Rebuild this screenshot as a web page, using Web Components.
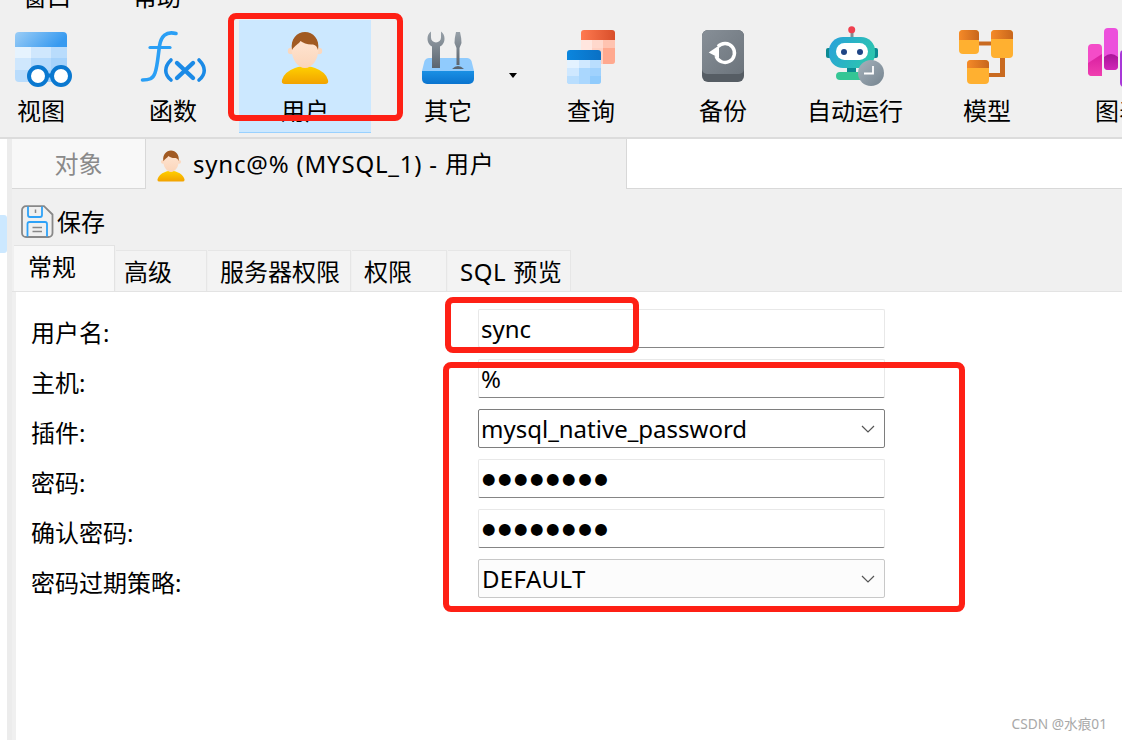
<!DOCTYPE html>
<html lang="zh">
<head>
<meta charset="utf-8">
<title>Navicat</title>
<style>
  html, body { margin: 0; height: 740px; overflow: hidden; background: #fff; }
  body { font: 24px/30px "Noto Sans", "Noto Sans CJK SC", sans-serif; color: #000; }
</style>
</head>
<body>
<app-window>
  <tool-bar>
    <tool-item label="视图">
      <svg width="76" height="62" viewBox="3 26 76 62">
        <defs>
          <linearGradient id="vh" x1="0" y1="0" x2="1" y2="0.3"><stop offset="0" stop-color="#9bcdf6"/><stop offset="1" stop-color="#379af0"/></linearGradient>
        </defs>
        <path d="M19 32h44a4 4 0 0 1 4 4v11H15V36a4 4 0 0 1 4-4z" fill="url(#vh)"/>
        <path d="M15 47h16v11H15z" fill="#e6f3fe"/><path d="M31 47h20v11H31z" fill="#cfe7fd"/><path d="M51 47h16v11H51z" fill="#b9dcfc"/>
        <path d="M15 58h16v12H15z" fill="#cfe7fd"/><path d="M31 58h20v12H31z" fill="#b5dafc"/><path d="M51 58h16v12H51z" fill="#a5d2fb"/>
        <path d="M15 70h16v12H19a4 4 0 0 1-4-4z" fill="#b9dcfc"/><path d="M31 70h20v12H31z" fill="#a5d2fb"/><path d="M51 70h16v12H51z" fill="#96cbfa"/>
        <path d="M44 73.500h12v4H44z" fill="#0a78d0"/>
        <circle cx="38" cy="76" r="9" fill="#fff" stroke="#0a78d0" stroke-width="4"/>
        <circle cx="61" cy="76" r="9" fill="#fff" stroke="#0a78d0" stroke-width="4"/>
      </svg>
    </tool-item>
    <tool-item label="函数">
      <svg width="76" height="62" viewBox="135 26 76 62" fill="none" stroke-linecap="round">
        <path d="M176 33.500C166 31 161 36 159.500 46C158 56 157.500 66 155 73C153 79 149 80 142.500 80" stroke="#2a9ff5" stroke-width="3.600"/>
        <path d="M150 47.500H170" stroke="#2a9ff5" stroke-width="3.200"/>
        <path d="M171 60C164 67 164 74 171 80M199 60C206 67 206 74 199 80" stroke="#1b8ae6" stroke-width="3.600"/>
        <path d="M177 63L193 78M193 63L177 78" stroke="#1b8ae6" stroke-width="4.400"/>
      </svg>
    </tool-item>
    <tool-item label="用户" selected>
      <user-avatar style="width:48px;height:54px;margin-top:5px"></user-avatar>
    </tool-item>
    <tool-item label="其它" wide>
      <svg width="76" height="62" viewBox="410 26 76 62">
        <defs>
          <linearGradient id="tb" x1="0" y1="0" x2="0" y2="1"><stop offset="0" stop-color="#1a90e4"/><stop offset="1" stop-color="#0a74cf"/></linearGradient>
          <linearGradient id="tg" x1="0" y1="0" x2="0" y2="1"><stop offset="0" stop-color="#98a1a9"/><stop offset="1" stop-color="#5b656f"/></linearGradient>
        </defs>
        <path d="M429 58h38q3 0 4.500 3l2.500 10h-52l2.500-10q1.500-3 4.500-3z" fill="#90cbfd"/>
        <path d="M422 71h52v8a5 5 0 0 1-5 5h-42a5 5 0 0 1-5-5z" fill="url(#tb)"/>
        <path d="M431 31.500v6a5 5 0 0 0 10 0v-6a9 9 0 0 1 3.500 7.500a8.500 8.500 0 0 1-4.500 7.500V68h-8V46.500a8.500 8.500 0 0 1-4.500-7.500a9 9 0 0 1 3.500-7.500z" fill="url(#tg)"/>
        <path d="M456 32h4q1.500 6 1.500 11l-2 5v17h-3V48l-2-5q0-5 1.500-11z" fill="url(#tg)"/>
        <path d="M452 69q6-6 12 0z" fill="#5b656f"/>
      </svg>
    </tool-item>
    <tool-item label="查询">
      <svg width="76" height="62" viewBox="553 26 76 62">
        <defs>
          <linearGradient id="qr" x1="0" y1="0" x2="1" y2="0"><stop offset="0" stop-color="#ff7a50"/><stop offset="1" stop-color="#d84e2a"/></linearGradient>
          <linearGradient id="qb" x1="0" y1="0" x2="1" y2="0"><stop offset="0" stop-color="#0b86de"/><stop offset="1" stop-color="#0a70c4"/></linearGradient>
        </defs>
        <path d="M584 30h28a3 3 0 0 1 3 3v7h-34v-7a3 3 0 0 1 3-3z" fill="url(#qr)"/>
        <path d="M581 40h34v21a3 3 0 0 1-3 3h-31z" fill="#ffd0c2"/>
        <path d="M603 40h12v8h-12z" fill="#ffc3b0"/><path d="M603 48h12v13a3 3 0 0 1-3 3h-9z" fill="#ffa98f"/><path d="M592 40h11v8h-11z" fill="#ffd8cc"/><path d="M581 40h11v10h-11z" fill="#ffe6df"/>
        <path d="M570 50h28a3 3 0 0 1 3 3v7h-34v-7a3 3 0 0 1 3-3z" fill="url(#qb)"/>
        <path d="M567 60h34v21a3 3 0 0 1-3 3h-28a3 3 0 0 1-3-3z" fill="#aad7fe"/>
        <path d="M567 60h12v8h-12z" fill="#e3f2ff"/><path d="M579 60h11v8h-11z" fill="#cfe8ff"/><path d="M590 60h11v8h-11z" fill="#b9defe"/>
        <path d="M567 68h12v8h-12z" fill="#cfe8ff"/><path d="M590 68h11v8h-11z" fill="#a0d2fd"/>
        <path d="M567 76h12v8h-9a3 3 0 0 1-3-3z" fill="#b9defe"/><path d="M590 76h11v5a3 3 0 0 1-3 3h-8z" fill="#90cbfc"/>
      </svg>
    </tool-item>
    <tool-item label="备份">
      <svg width="76" height="62" viewBox="685 26 76 62" fill="none">
        <defs>
          <linearGradient id="bk" x1="0" y1="0" x2="1" y2="1"><stop offset="0" stop-color="#878f97"/><stop offset="1" stop-color="#6c747c"/></linearGradient>
        </defs>
        <rect x="702" y="30" width="42" height="52" rx="6" fill="#565d64"/>
        <path d="M708 30h30a6 6 0 0 1 6 6v33a5 5 0 0 1-5 5h-32a5 5 0 0 1-5-5V36a6 6 0 0 1 6-6z" fill="url(#bk)"/>
        <path d="M718 46.500A9.500 9.500 0 1 1 716 56" stroke="#fff" stroke-width="3.400"/>
        <path d="M708.700 52.500L719 45.500V58z" fill="#fff"/>
      </svg>
    </tool-item>
    <tool-item label="自动运行">
      <svg width="76" height="62" viewBox="817 26 76 62">
        <defs>
          <linearGradient id="rh" x1="0" y1="0" x2="1" y2="0.4"><stop offset="0" stop-color="#28a0dc"/><stop offset="1" stop-color="#2cc4b0"/></linearGradient>
          <linearGradient id="rc" x1="0" y1="0" x2="1" y2="1"><stop offset="0" stop-color="#a6b2bc"/><stop offset="1" stop-color="#75848f"/></linearGradient>
        </defs>
        <path d="M850.500 32h3v6h-3z" fill="#858b90"/>
        <circle cx="851.700" cy="29.800" r="3.500" fill="#f0404f"/>
        <rect x="826" y="48" width="6" height="10" rx="2" fill="#0c8a92"/>
        <rect x="872" y="48" width="6" height="10" rx="2" fill="#0c8a92"/>
        <rect x="829" y="37" width="46" height="31" rx="14" fill="url(#rh)"/>
        <rect x="836" y="43" width="32" height="17" rx="8.500" fill="#fff"/>
        <circle cx="844" cy="52" r="3" fill="#1f4585"/><circle cx="860" cy="52" r="3" fill="#1f4585"/>
        <path d="M847 68h9v5h-9z" fill="#0c8a92"/>
        <rect x="836" y="72" width="36" height="8" rx="4" fill="#35c695"/>
        <circle cx="871" cy="73" r="13" fill="url(#rc)"/>
        <path d="M873 66v7.500h-9" fill="none" stroke="#fff" stroke-width="1.800"/>
      </svg>
    </tool-item>
    <tool-item label="模型">
      <svg width="76" height="62" viewBox="949 26 76 62">
        <defs>
          <linearGradient id="mh" x1="0" y1="0" x2="1" y2="0"><stop offset="0" stop-color="#f58a28"/><stop offset="1" stop-color="#c8661c"/></linearGradient>
        </defs>
        <path d="M979 41.500h12v4h-12zM1000 58h5v19h-16v-4h11z" fill="#c96a20"/>
        <rect x="959" y="30" width="20" height="24" rx="4" fill="#ffb030"/>
        <path d="M963 30h12a4 4 0 0 1 4 4v6h-20v-6a4 4 0 0 1 4-4z" fill="url(#mh)"/>
        <rect x="991" y="30" width="22" height="28" rx="4" fill="#ffb030"/>
        <path d="M995 30h14a4 4 0 0 1 4 4v5h-22v-5a4 4 0 0 1 4-4z" fill="url(#mh)"/>
        <rect x="967" y="60" width="22" height="24" rx="4" fill="#ffb030"/>
        <path d="M971 60h14a4 4 0 0 1 4 4v4h-22v-4a4 4 0 0 1 4-4z" fill="url(#mh)"/>
      </svg>
    </tool-item>
    <tool-item label="图表">
      <svg width="76" height="62" viewBox="1081 26 76 62">
        <defs>
          <linearGradient id="c1" x1="0" y1="0" x2="0" y2="1"><stop offset="0" stop-color="#d81ea0"/><stop offset="1" stop-color="#f03fb0"/></linearGradient>
          <linearGradient id="c2" x1="0" y1="0" x2="0" y2="1"><stop offset="0" stop-color="#a81498"/><stop offset="1" stop-color="#d028b8"/></linearGradient>
        </defs>
        <rect x="1088" y="44" width="14" height="32" rx="4" fill="#f44cc8"/>
        <path d="M1088 63l14-9v22h-10a4 4 0 0 1-4-4z" fill="url(#c1)"/>
        <rect x="1104" y="28" width="14" height="42" rx="4" fill="#ec50dc"/>
        <path d="M1104 57q7-6 14 0v9a4 4 0 0 1-4 4h-6a4 4 0 0 1-4-4z" fill="url(#c2)"/>
        <rect x="1120" y="50" width="14" height="37" rx="4" fill="#a838d8"/>
      </svg>
    </tool-item>
  </tool-bar>

  <doc-tabs>
    <span slot="idle">对象</span>
    <user-avatar slot="icon" style="width:28px;height:32px"></user-avatar>
    <span slot="title">sync@% (MYSQL_1) - 用户</span>
  </doc-tabs>

  <save-bar>保存</save-bar>

  <form-tabs>
    <form-tab active left="14" right="38">常规</form-tab>
    <form-tab left="8" right="34">高级</form-tab>
    <form-tab left="12" right="10">服务器权限</form-tab>
    <form-tab left="12" right="34">权限</form-tab>
    <form-tab left="12" right="8" style="letter-spacing:.6px">SQL 预览</form-tab>
  </form-tabs>

  <user-form>
    <form-field label="用户名:" kind="text">sync</form-field>
    <form-field label="主机:" kind="text">%</form-field>
    <form-field label="插件:" kind="select">mysql_native_password</form-field>
    <form-field label="密码:" kind="password">●●●●●●●●</form-field>
    <form-field label="确认密码:" kind="password">●●●●●●●●</form-field>
    <form-field label="密码过期策略:" kind="select-soft">DEFAULT</form-field>
  </user-form>

  <red-mark style="left:228px;top:13px;width:175px;height:108px"></red-mark>
  <red-mark style="left:445px;top:297px;width:194px;height:56px"></red-mark>
  <red-mark style="left:443px;top:362px;width:522px;height:250px"></red-mark>
  <water-mark>CSDN @水痕01</water-mark>
</app-window>

<script>
class AppWindow extends HTMLElement {
  constructor() {
    super();
    this.attachShadow({ mode: 'open' });
    this.shadowRoot.innerHTML = `
      <style>
        :host { display: grid; grid-template-columns: 12px 1fr; grid-template-rows: 139px 1fr; width: 1122px; height: 740px; position: relative; overflow: hidden; }
        .top { grid-column: 1 / 3; display: block; }
        .rail { background: linear-gradient(90deg, #fff 7px, #ececec 7px); padding-top: 76px; }
        .rail i { display: block; width: 7px; height: 38px; background: #cce8ff; border-radius: 0 3px 3px 0; }
        .main { background: #f0f0f0; display: flex; flex-direction: column; min-width: 0; }
      </style>
      <div class="top"><slot name="top"></slot></div>
      <div class="rail"><i></i></div>
      <div class="main"><slot></slot></div>
      <slot name="over"></slot>
    `;
    for (const el of this.children) {
      if (el.localName === 'tool-bar') el.slot = 'top';
      if (el.localName === 'red-mark' || el.localName === 'water-mark') el.slot = 'over';
    }
  }
}

class ToolBar extends HTMLElement {
  constructor() {
    super();
    this.attachShadow({ mode: 'open' });
    this.shadowRoot.innerHTML = `
      <style>
        :host { display: block; height: 139px; box-sizing: border-box; background: #f0f0f0; border-bottom: 2px solid #dcdcdc; overflow: hidden; }
        .menu { display: flex; gap: 62px; height: 20px; padding-left: 23px; }
        .menu span { margin-top: -18px; height: 30px; }
        .tools { display: flex; margin-left: -25px; width: 1300px; }
      </style>
      <div class="menu"><span>窗口</span><span>帮助</span></div>
      <div class="tools"><slot></slot></div>
    `;
  }
}

class ToolItem extends HTMLElement {
  constructor() {
    super();
    this.attachShadow({ mode: 'open' });
    this.shadowRoot.innerHTML = `
      <style>
        :host { display: flex; flex-direction: column; align-items: center; flex: none; width: 132px; height: 113px; box-sizing: border-box; padding-top: 6px; position: relative; }
        :host([wide]) { width: 154px; }
        :host([selected]) { background: #cce8ff; border-bottom: 1px solid #99d1ff; }
        .icon { height: 62px; display: flex; justify-content: center; align-items: flex-start; }
        .label { margin-top: 8px; white-space: nowrap; line-height: 30px; }
        .arrow { display: none; position: absolute; right: 8px; top: 53px; width: 0; height: 0; border: 4.500px solid transparent; border-top: 5px solid #000; border-bottom: 0; }
        :host([wide]) .arrow { display: block; }
      </style>
      <div class="icon"><slot></slot></div>
      <div class="label">${this.getAttribute('label')}</div>
      <span class="arrow"></span>
    `;
  }
}

class UserAvatar extends HTMLElement {
  constructor() {
    super();
    this.attachShadow({ mode: 'open' });
    this.shadowRoot.innerHTML = `
      <style>
        :host { display: block; }
        svg { display: block; width: 100%; height: 100%; }
      </style>
      <svg viewBox="281 31 48 54" preserveAspectRatio="none">
        <defs>
          <linearGradient id="body" x1="0" y1="0" x2="0" y2="1"><stop offset="0" stop-color="#ffd000"/><stop offset="1" stop-color="#f2a200"/></linearGradient>
          <linearGradient id="skin" x1="0" y1="0" x2="0" y2="1"><stop offset="0" stop-color="#ffe6d4"/><stop offset="1" stop-color="#fbd5ba"/></linearGradient>
        </defs>
        <path d="M282 80Q284 72 295 68Q300 65.500 305 67Q310 65.500 315 68Q326 72 328 80Q329 84 325 84H285Q281 84 282 80Z" fill="url(#body)"/>
        <circle cx="291" cy="51" r="3.200" fill="#fcd8be"/><circle cx="319" cy="51" r="3.200" fill="#fcd8be"/>
        <path d="M291.500 48C291.500 60 298 68 305 68C312 68 318.500 60 318.500 48C318.500 40 312 36 305 36C298 36 291.500 40 291.500 48Z" fill="url(#skin)"/>
        <path d="M292 50C290 39 297 32 305 32C313 32 320 39 318 50C317 47 316 45 313 44.500C308 45 303 43 300.500 41C299 44 295 45 292 50Z" fill="#a15a22"/>
      </svg>
    `;
  }
}

class DocTabs extends HTMLElement {
  constructor() {
    super();
    this.attachShadow({ mode: 'open' });
    this.shadowRoot.innerHTML = `
      <style>
        :host { display: flex; height: 50px; flex: none; box-sizing: border-box; }
        .idle { width: 134px; box-sizing: border-box; background: #f8f8f8; border-bottom: 1px solid #d8d8d8; border-right: 1px solid #d8d8d8; color: #8a8a8a; display: flex; align-items: center; justify-content: center; }
        .active { width: 480px; box-sizing: border-box; display: flex; align-items: center; gap: 8px; padding: 0 0 0 11px; white-space: nowrap; }
        .active ::slotted(user-avatar) { flex: none; margin-top: 4px; }
        .title { letter-spacing: .8px; }
        .rest { flex: 1; background: #fff; border-left: 1px solid #d8d8d8; border-bottom: 1px solid #d8d8d8; }
      </style>
      <div class="idle"><slot name="idle"></slot></div>
      <div class="active"><slot name="icon"></slot><span class="title"><slot name="title"></slot></span></div>
      <div class="rest"></div>
    `;
  }
}

class SaveBar extends HTMLElement {
  constructor() {
    super();
    this.attachShadow({ mode: 'open' });
    this.shadowRoot.innerHTML = `
      <style>
        :host { display: flex; align-items: center; gap: 3px; height: 56px; flex: none; box-sizing: border-box; padding: 0 0 0 9px; }
        svg { display: block; flex: none; margin-top: 8px; }
        span { margin-top: 10px; }
      </style>
      <svg width="33" height="33" viewBox="0 0 33 33" fill="none">
        <path d="M5 1.200H23L31.500 9.500V28a4 4 0 0 1-4 4H5a4 4 0 0 1-4-4V5.200a4 4 0 0 1 4-4z" stroke="#888" stroke-width="1.800"/>
        <path d="M7 1.500V10a2 2 0 0 0 2 2H19a2 2 0 0 0 2-2V1.500" stroke="#2ea2f8" stroke-width="1.800"/>
        <path d="M14.500 4.500v3.500" stroke="#888" stroke-width="1.500"/>
        <path d="M6.500 31.500V19a2 2 0 0 1 2-2H24a2 2 0 0 1 2 2V31.500" stroke="#2ea2f8" stroke-width="1.800"/>
        <path d="M11.500 22.500H21M11.500 26.500H21" stroke="#888" stroke-width="1.500"/>
      </svg>
      <span><slot></slot></span>
    `;
  }
}

class FormTabs extends HTMLElement {
  constructor() {
    super();
    this.attachShadow({ mode: 'open' });
    this.shadowRoot.innerHTML = `
      <style>
        :host { display: flex; align-items: flex-end; height: 47px; flex: none; box-sizing: border-box; padding-left: 2px; gap: 1px; border-bottom: 1px solid #e3e3e3; }
      </style>
      <slot></slot>
    `;
  }
}

class FormTab extends HTMLElement {
  constructor() {
    super();
    this.attachShadow({ mode: 'open' });
    const left = this.getAttribute('left');
    const right = this.getAttribute('right');
    this.shadowRoot.innerHTML = `
      <style>
        :host { display: block; height: 41px; box-sizing: border-box; background: #f3f3f3; padding: 6px ${right}px 0 ${left}px; border: solid #e6e6e6; border-width: 1px 1px 0 0; line-height: 30px; white-space: nowrap; }
        :host([active]) { height: 46px; background: #f8f8f8; padding-top: 6px; border-color: #e3e3e3; }
      </style>
      <slot></slot>
    `;
  }
}

class UserForm extends HTMLElement {
  constructor() {
    super();
    this.attachShadow({ mode: 'open' });
    this.shadowRoot.innerHTML = `
      <style>
        :host { display: flex; flex-direction: column; gap: 11px; flex: 1; background: #fff; margin-left: 4px; padding: 17px 0 0 15px; }
      </style>
      <slot></slot>
    `;
  }
}

class FormField extends HTMLElement {
  constructor() {
    super();
    this.attachShadow({ mode: 'open' });
    const kind = this.getAttribute('kind');
    const chevron = kind.startsWith('select')
      ? '<svg class="chev" width="14" height="8" viewBox="0 0 14 8" fill="none"><path d="M1 1l6 6 6-6" stroke="#555" stroke-width="1.200"/></svg>'
      : '';
    this.shadowRoot.innerHTML = `
      <style>
        :host { display: flex; height: 39px; align-items: stretch; }
        .name { width: 447px; flex: none; line-height: 48px; height: 39px; white-space: nowrap; }
        .box { width: 407px; box-sizing: border-box; display: flex; align-items: center; justify-content: space-between; padding: 0 9px 0 2px; border: 1px solid #e8e8e8; border-bottom-color: #858585; border-radius: 2px; background: #fff; white-space: nowrap; line-height: 30px; }
        :host([kind="select"]) .box { border-color: #7e7e7e; }
        :host([kind="select-soft"]) .box { border-color: #c8c8c8; background: #fcfcfc; padding-left: 3px; }
        :host([kind="select-soft"]) .val { letter-spacing: .35px; }
        :host([kind="password"]) .val { font: 15.500px/30px "DejaVu Sans", sans-serif; letter-spacing: 2.500px; margin-left: 1px; }
        .chev { flex: none; }
      </style>
      <div class="name">${this.getAttribute('label')}</div>
      <div class="box"><span class="val"><slot></slot></span>${chevron}</div>
    `;
  }
}

class RedMark extends HTMLElement {
  constructor() {
    super();
    this.attachShadow({ mode: 'open' });
    this.shadowRoot.innerHTML = `
      <style>
        :host { display: block; position: absolute; box-sizing: border-box; border: 6px solid #fe2015; border-radius: 8px; }
      </style>
    `;
  }
}

class WaterMark extends HTMLElement {
  constructor() {
    super();
    this.attachShadow({ mode: 'open' });
    this.shadowRoot.innerHTML = `
      <style>
        :host { display: block; position: absolute; right: 15px; top: 715px; font-size: 13.700px; line-height: 18px; color: #a8a8a8; white-space: nowrap; }
      </style>
      <slot></slot>
    `;
  }
}

customElements.define('app-window', AppWindow);
customElements.define('tool-bar', ToolBar);
customElements.define('tool-item', ToolItem);
customElements.define('user-avatar', UserAvatar);
customElements.define('doc-tabs', DocTabs);
customElements.define('save-bar', SaveBar);
customElements.define('form-tabs', FormTabs);
customElements.define('form-tab', FormTab);
customElements.define('user-form', UserForm);
customElements.define('form-field', FormField);
customElements.define('red-mark', RedMark);
customElements.define('water-mark', WaterMark);
</script>
</body>
</html>
